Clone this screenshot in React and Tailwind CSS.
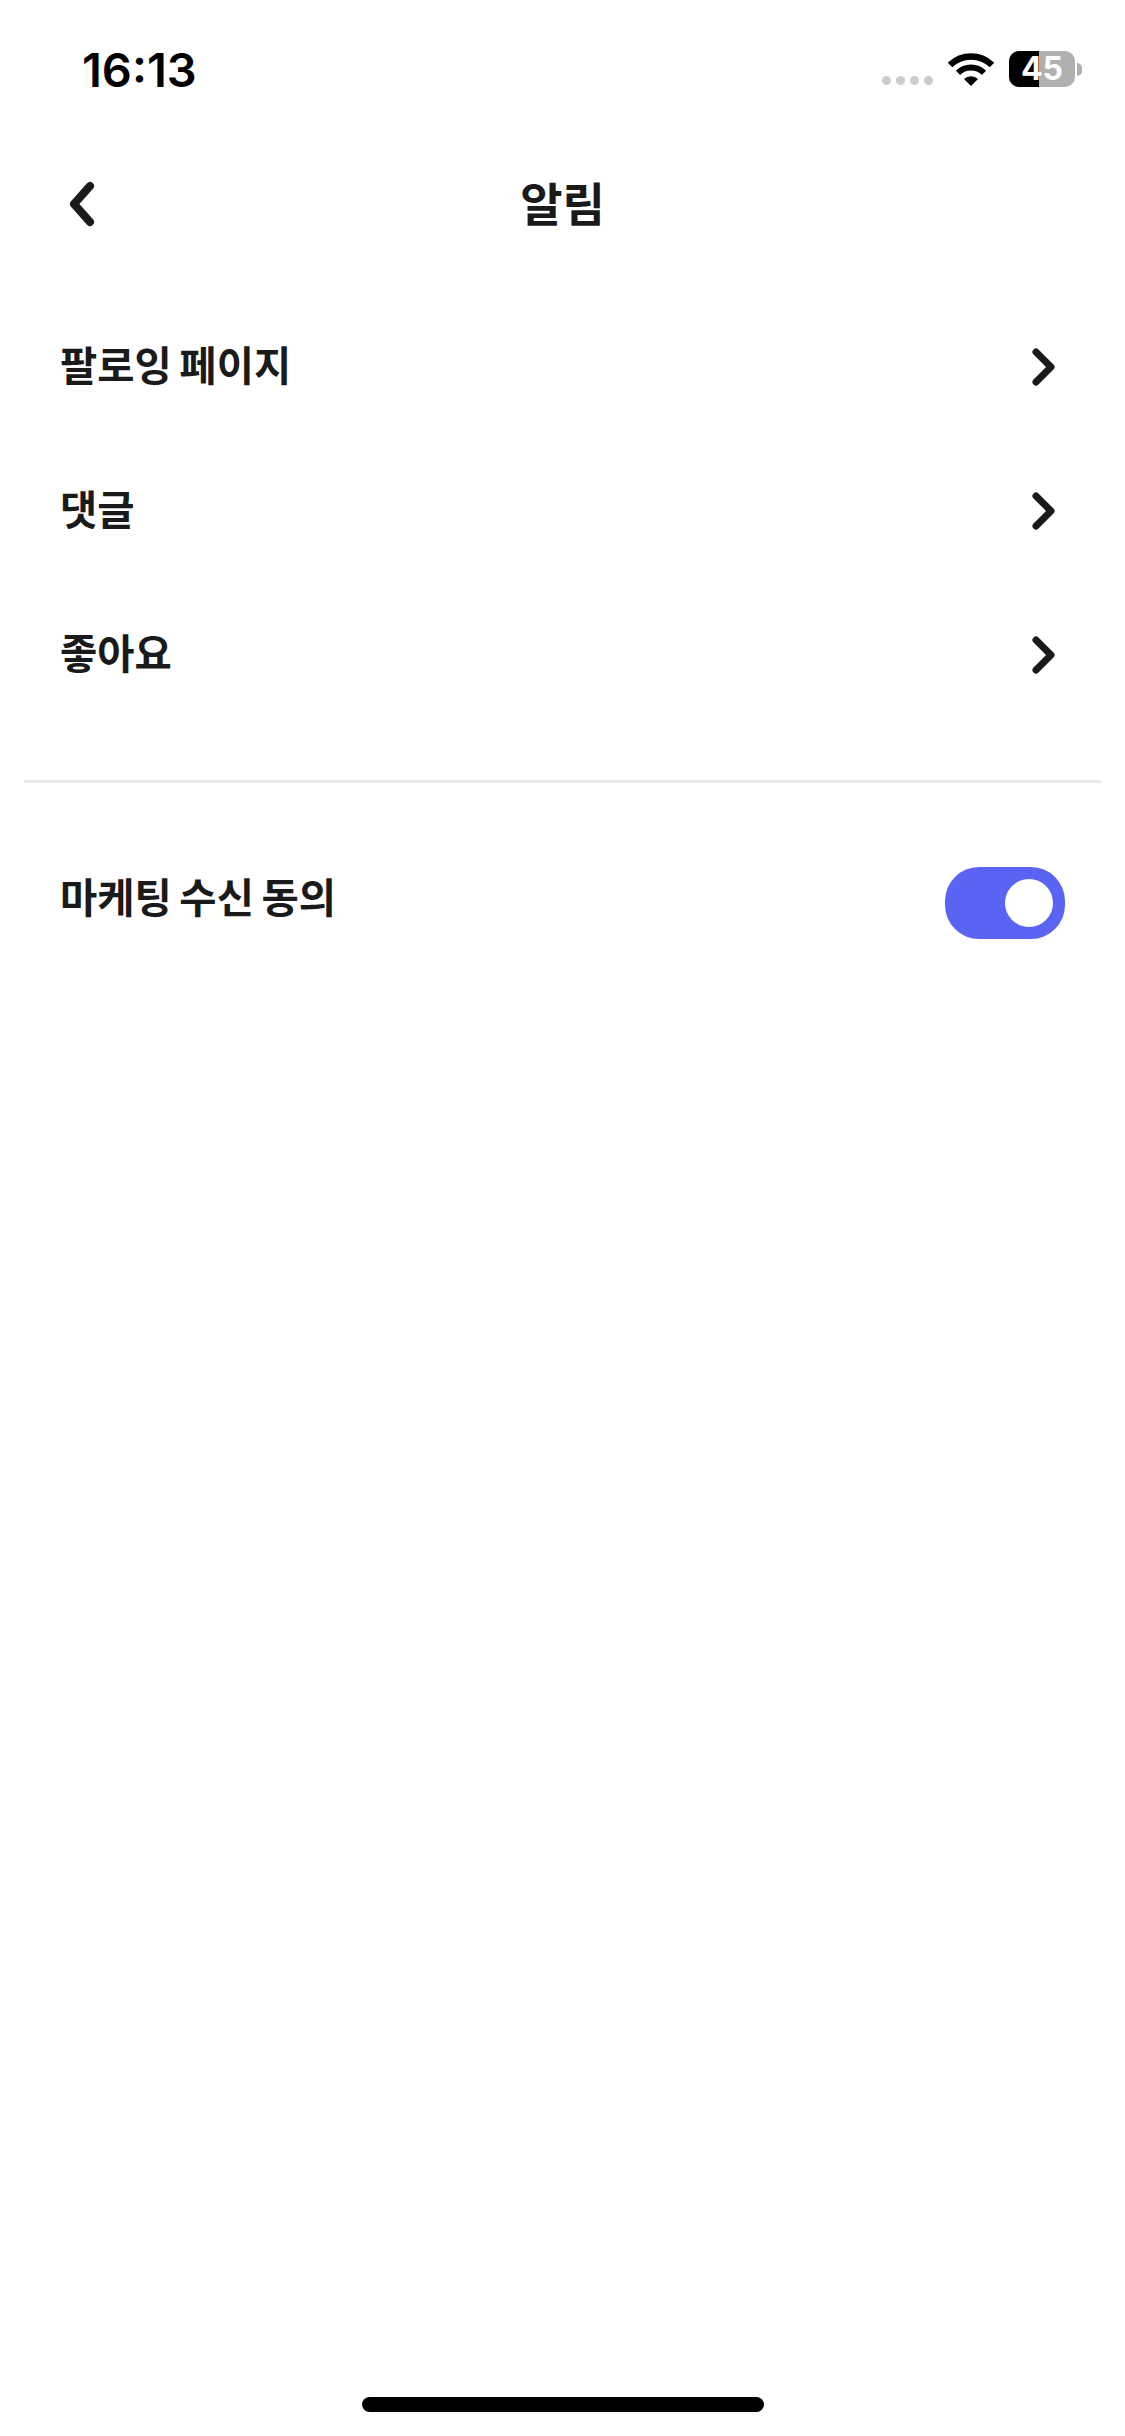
// App.jsx
const rows = ["팔로잉 페이지", "댓글", "좋아요"];

const BackChevron = () => (
  <svg width="26" height="46" viewBox="0 0 26 46" fill="none">
    <path d="M21 5L5 23L21 41" stroke="#1a1a1a" strokeWidth="8" strokeLinecap="round" strokeLinejoin="round" />
  </svg>
);

const RowChevron = () => (
  <svg width="23" height="38" viewBox="0 0 23 38" fill="none">
    <path d="M4 4L19 19L4 34" stroke="#1a1a1a" strokeWidth="7" strokeLinecap="round" strokeLinejoin="round" />
  </svg>
);

const Wifi = () => (
  <svg width="46" height="33" viewBox="0 0 46 33" fill="none">
    <path d="M2 12A30 30 0 0 1 44 12" stroke="#000" strokeWidth="6.5" />
    <path d="M10 19.8A18.5 18.5 0 0 1 36 19.8" stroke="#000" strokeWidth="6" />
    <path d="M23 33L16 26A10 10 0 0 1 30 26Z" fill="#000" />
  </svg>
);

const Battery = () => (
  <div className="flex items-center gap-[2px]">
    <div className="relative flex h-[36px] w-[66px] rounded-[10px] bg-[#b0b0b0]">
      <div className="h-full w-[30px] rounded-l-[10px] bg-black" />
      <span className="absolute inset-0 flex items-center justify-center text-[32px] font-bold leading-none text-white">
        45
      </span>
    </div>
    <div className="h-[13px] w-[5px] rounded-r-full bg-[#b0b0b0]" />
  </div>
);

export default function App() {
  return (
    <div
      className="flex h-[2436px] w-[1125px] flex-col bg-white text-[#1a1a1a]"
      style={{ fontFamily: '"Inter", "Noto Sans CJK KR", sans-serif' }}
    >
      {/* status bar */}
      <div className="flex h-[138px] items-center justify-between pl-[82px] pr-[43px]">
        <span className="text-[47px] font-semibold leading-none text-black">16:13</span>
        <div className="flex items-center">
          <div className="mr-[15px] mt-[22px] flex gap-[5px]">
            {[0, 1, 2, 3].map((i) => (
              <div key={i} className="h-[9px] w-[9px] rounded-full bg-[#cccccc]" />
            ))}
          </div>
          <Wifi />
          <div className="ml-[15px]">
            <Battery />
          </div>
        </div>
      </div>

      {/* nav */}
      <div className="relative flex h-[132px] items-center justify-center">
        <div className="absolute left-[69px] top-[43px]">
          <BackChevron />
        </div>
        <h1 className="text-[46px] font-bold leading-none">알림</h1>
      </div>

      {/* rows */}
      <div className="mt-[25px]">
        {rows.map((label) => (
          <div key={label} className="flex h-[144px] items-center justify-between pl-[60px] pr-[70px]">
            <span className="text-[40.5px] font-bold leading-none [word-spacing:-2px]">{label}</span>
            <RowChevron />
          </div>
        ))}
      </div>

      <div className="mx-[24px] mt-[53px] h-[3px] bg-[#e9e9e9]" />

      <div className="mt-[48px] flex h-[144px] items-center justify-between pl-[60px] pr-[60px]">
        <span className="mb-[7px] text-[40.5px] font-bold leading-none [word-spacing:-2px]">마케팅 수신 동의</span>
        <div className="flex h-[72px] w-[120px] items-center justify-end rounded-[34px] bg-[#5b63f5] pr-[12px]">
          <div className="h-[48px] w-[48px] rounded-full bg-white" />
        </div>
      </div>

      <div className="mt-auto mb-[24px] h-[15px] w-[402px] self-center rounded-full bg-black" />
    </div>
  );
}
